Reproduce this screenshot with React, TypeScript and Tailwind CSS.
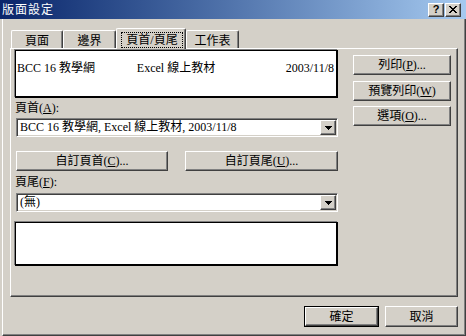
import React from "react";

// Win2000 style 3D edges
const raised =
  "border border-t-white border-l-white border-r-[#404040] border-b-[#404040] shadow-[inset_-1px_-1px_0_#808080]";
const sunken =
  "border border-t-[#808080] border-l-[#808080] border-r-white border-b-white shadow-[inset_1px_1px_0_#404040,inset_-1px_-1px_0_#d4d0c8]";

const Key = ({ children }: { children: React.ReactNode }) => (
  <span className="underline underline-offset-[1px]">{children}</span>
);

const Button = ({
  children,
  className = "",
}: {
  children: React.ReactNode;
  className?: string;
}) => (
  <div
    className={`flex items-center justify-center bg-[#d4d0c8] text-[12px] leading-none text-black whitespace-nowrap ${raised} ${className}`}
  >
    {children}
  </div>
);

const Arrow = () => (
  <svg width="7" height="4" viewBox="0 0 7 4" shapeRendering="crispEdges">
    <path d="M0 0h7v1H0zM1 1h5v1H1zM2 2h3v1H2zM3 3h1v1H3z" fill="#000" />
  </svg>
);

const Combo = ({ text }: { text: React.ReactNode }) => (
  <div className={`ml-[1px] w-[322px] h-[19px] flex bg-white p-[1px] ${sunken}`}>
    <div className="flex-1 pl-[2px] text-[12px] leading-[15px] whitespace-nowrap overflow-hidden">
      {text}
    </div>
    <div className={`w-[16px] h-[15px] flex items-center justify-center bg-[#d4d0c8] ${raised}`}>
      <Arrow />
    </div>
  </div>
);

const Preview = ({
  left,
  center,
  right,
  className = "",
}: {
  left?: string;
  center?: string;
  right?: string;
  className?: string;
}) => (
  <div
    className={`w-[323px] bg-white border-t border-l border-r-2 border-b-2 border-black shadow-[-1px_-1px_0_#808080] ${className}`}
  >
    <div className="grid grid-cols-3 pt-[10px] text-[12px] leading-[14px] whitespace-nowrap">
      <div className="pl-[1px]">{left}</div>
      <div className="text-center">{center}</div>
      <div className="pr-[2px] text-right">{right}</div>
    </div>
  </div>
);

const Tab = ({ children, className = "" }: { children: React.ReactNode; className?: string }) => (
  <div
    className={`h-[18px] pt-[2px] flex items-center justify-center text-[12px] leading-none rounded-t-[2px] border-t border-l border-r border-t-white border-l-white border-r-[#404040] shadow-[inset_-1px_0_0_#808080] ${className}`}
  >
    {children}
  </div>
);

export default function App() {
  return (
    <div className="w-[466px] h-[336px] flex flex-col bg-[#d4d0c8] text-black font-['Liberation_Serif','Noto_Sans_CJK_TC',serif] overflow-hidden">
      {/* title bar */}
      <div className="h-[19px] flex items-center bg-linear-to-r from-[#0a246a] to-[#a6caf0]">
        <span className="pl-[2px] text-[12px] leading-none tracking-[1px] text-white">版面設定</span>
        <div className="ml-auto mr-[5px] flex gap-[1px]">
          <div className={`w-[16px] h-[14px] flex items-center justify-center bg-[#d4d0c8] ${raised}`}>
            <span className="font-['Liberation_Sans',sans-serif] font-bold text-[11px] leading-none">?</span>
          </div>
          <div className={`w-[16px] h-[14px] flex items-center justify-center bg-[#d4d0c8] ${raised}`}>
            <svg width="8" height="7" viewBox="0 0 8 7" shapeRendering="crispEdges">
              <path
                d="M0 0h2v1H0zM6 0h2v1H6zM1 1h2v1H1zM5 1h2v1H5zM2 2h4v1H2zM3 3h2v1H3zM2 4h4v1H2zM1 5h2v1H1zM5 5h2v1H5zM0 6h2v1H0zM6 6h2v1H6z"
                fill="#000"
              />
            </svg>
          </div>
        </div>
      </div>

      {/* body */}
      <div className="ml-[2px] h-[317px] flex flex-col pl-[7px] pr-[7px] pt-[9px] border-l border-r border-b border-l-white border-r-[#404040] border-b-[#404040] shadow-[inset_-1px_-1px_0_#808080]">
        {/* tabs */}
        <div className="h-[20px] flex items-end pl-[1px]">
          <Tab className="w-[52px]">頁面</Tab>
          <Tab className="w-[53px]">邊界</Tab>
          <div className="relative z-10 -mb-px w-[70px] h-[21px] pt-[3px] pl-[4px] bg-[#d4d0c8] rounded-t-[2px] border-t border-l border-r border-t-white border-l-white border-r-[#404040] shadow-[inset_-1px_0_0_#808080]">
            <div className="w-[62px] h-[16px] flex items-center justify-center border border-dotted border-black text-[12px] leading-none">
              頁首/頁尾
            </div>
          </div>
          <Tab className="w-[53px]">工作表</Tab>
        </div>

        {/* tab page */}
        <div className={`h-[249px] flex bg-[#d4d0c8] ${raised}`}>
          <div className="pl-[4px] flex flex-col">
            <Preview className="mt-[1px] h-[48px]" left="BCC 16 教學網" center="Excel 線上教材" right="2003/11/8" />

            <div className="mt-[4px] h-[13px] text-[12px] leading-[13px]">
              頁首(<Key>A</Key>):
            </div>
            <div className="mt-[3px]">
              <Combo text="BCC 16 教學網, Excel 線上教材, 2003/11/8" />
            </div>

            <div className="mt-[14px] flex">
              <Button className="ml-[1px] w-[152px] h-[20px]">
                自訂頁首(<Key>C</Key>)...
              </Button>
              <Button className="ml-[17px] w-[153px] h-[20px]">
                自訂頁尾(<Key>U</Key>)...
              </Button>
            </div>

            <div className="mt-[5px] h-[13px] text-[12px] leading-[13px]">
              頁尾(<Key>F</Key>):
            </div>
            <div className="mt-[4px]">
              <Combo text="(無)" />
            </div>

            <Preview className="mt-[10px] h-[44px]" />
          </div>

          <div className="ml-[15px] pt-[6px] flex flex-col">
            <Button className="w-[98px] h-[20px]">
              列印(<Key>P</Key>)...
            </Button>
            <Button className="mt-[6px] w-[98px] h-[20px]">
              預覽列印(<Key>W</Key>)
            </Button>
            <Button className="mt-[5px] w-[98px] h-[20px]">
              選項(<Key>O</Key>)...
            </Button>
          </div>
        </div>

        {/* dialog buttons */}
        <div className="mt-[9px] flex justify-end gap-[6px]">
          <div className="w-[75px] h-[21px] border border-black flex">
            <Button className="flex-1">確定</Button>
          </div>
          <Button className="w-[73px] h-[21px]">取消</Button>
        </div>
      </div>
    </div>
  );
}
